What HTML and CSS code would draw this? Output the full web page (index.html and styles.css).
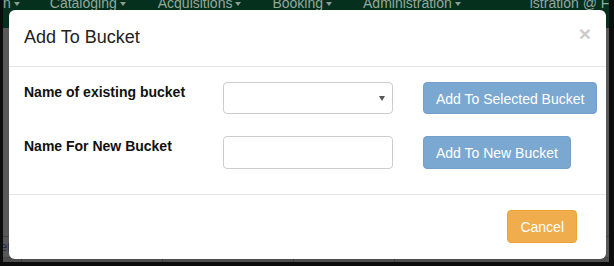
FILE: index.html
```html
<!DOCTYPE html>
<html lang="en">
<head>
<meta charset="utf-8">
<title>Add To Bucket</title>
<link rel="stylesheet" href="styles.css">
</head>
<body>
<div class="screen">
  <div class="page">
    <nav class="navbar">
      <span class="nav-item n1">n<i class="caret"></i></span>
      <span class="nav-item n2">Cataloging<i class="caret"></i></span>
      <span class="nav-item n3">Acquisitions<i class="caret"></i></span>
      <span class="nav-item n4">Booking<i class="caret"></i></span>
      <span class="nav-item n5">Administration<i class="caret"></i></span>
      <span class="nav-item n6">istration @ F</span>
    </nav>
    <div class="page-content">
      <div class="grid-rows">
        <div class="grid-row"><span class="cell-text">et</span></div>
        <div class="grid-row cells">
          <span class="cell c1"></span><span class="cell c2"></span><span class="cell c3"></span><span class="cell c4"></span>
        </div>
      </div>
    </div>
  </div>

  <div class="modal">
    <div class="modal-header">
      <h4 class="modal-title">Add To Bucket</h4>
      <button class="close" type="button">&times;</button>
    </div>
    <div class="modal-body">
      <div class="form-row">
        <label class="row-label">Name of existing bucket</label>
        <div class="select-box"><span class="select-caret"></span></div>
        <button class="btn btn-primary" type="button" disabled>Add To Selected Bucket</button>
      </div>
      <div class="form-row">
        <label class="row-label">Name For New Bucket</label>
        <div class="text-box"></div>
        <button class="btn btn-primary" type="button" disabled>Add To New Bucket</button>
      </div>
    </div>
    <div class="modal-footer">
      <button class="btn btn-warning" type="button">Cancel</button>
    </div>
  </div>
</div>
</body>
</html>
```

FILE: styles.css
```css
html, body {
  margin: 0;
  padding: 0;
  width: 614px;
  height: 266px;
  overflow: hidden;
  background: #0c0c0c;
}

.screen {
  position: relative;
  width: 606px;
  height: 262px;
  margin-left: 3px;
  overflow: hidden;
  background: #585858;
  font-family: "Liberation Sans", Arial, sans-serif;
}

.page {
  display: flex;
  flex-direction: column;
  height: 100%;
}

.navbar {
  height: 28px;
  flex: none;
  background: #05301e;
  display: flex;
  align-items: flex-start;
  color: #94a89c;
  font-size: 14px;
  line-height: 14px;
}

.nav-item {
  margin-top: -4px;
  white-space: nowrap;
}

.n1 { margin-left: 0; }
.n2 { margin-left: 30px; }
.n3 { margin-left: 32px; }
.n4 { margin-left: 31px; }
.n5 { margin-left: 31px; }
.n6 { margin-left: 69px; }

.caret {
  display: inline-block;
  width: 0;
  height: 0;
  margin-left: 3px;
  vertical-align: middle;
  border-top: 4px solid #8a9d92;
  border-left: 3.5px solid transparent;
  border-right: 3.5px solid transparent;
}

.page-content {
  flex: 1;
  display: flex;
  flex-direction: column;
  justify-content: flex-end;
}

.grid-rows {
  display: flex;
  flex-direction: column;
}

.grid-row {
  height: 20px;
  border-top: 1px solid #474747;
  font-size: 13px;
  line-height: 20px;
  color: #1d3050;
}

.cell-text {
  margin-left: -3px;
}

.grid-row.cells {
  height: 4px;
  display: flex;
  background: #4e4e4e;
}

.cell {
  height: 4px;
  border-left: 1px solid #3a3a3a;
}
.c1 { margin-left: 18px; width: 140px; }
.c2 { width: 130px; }
.c3 { width: 100px; }
.c4 { width: 150px; }

/* Modal */
.modal {
  position: absolute;
  left: 6px;
  top: 10px;
  width: 597px;
  height: 249px;
  background: #fff;
  border-radius: 6px;
  box-sizing: border-box;
  display: flex;
  flex-direction: column;
  color: #333;
  font-size: 14px;
  line-height: 20px;
}

.modal-header {
  display: flex;
  align-items: flex-start;
  justify-content: space-between;
  padding: 15px;
  border-bottom: 1px solid #e5e5e5;
}

.modal-title {
  margin: 0;
  font-size: 18px;
  font-weight: normal;
  line-height: 25.7px;
  color: #222;
}

.close {
  margin: 0;
  padding: 0;
  border: 0;
  background: transparent;
  font-family: "Liberation Sans", Arial, sans-serif;
  font-size: 21px;
  font-weight: bold;
  line-height: 21px;
  color: #000;
  opacity: 0.2;
  margin-top: -2px;
}

.modal-body {
  padding: 15px 15px 25px 15px;
  display: flex;
  flex-direction: column;
  gap: 21px;
}

.form-row {
  display: flex;
  align-items: flex-start;
  height: 33px;
}

.row-label {
  width: 199px;
  flex: none;
  font-weight: bold;
  color: #111;
  line-height: 20px;
}

.select-box,
.text-box {
  width: 170px;
  height: 33px;
  flex: none;
  box-sizing: border-box;
  border: 1px solid #cccccc;
  border-radius: 4px;
  background: #fff;
  margin-right: 30px;
}

.select-box {
  display: flex;
  align-items: center;
  justify-content: flex-end;
  padding-right: 7px;
  height: 32px;
}

.select-caret {
  width: 0;
  height: 0;
  border-top: 5px solid #555;
  border-left: 3.5px solid transparent;
  border-right: 3.5px solid transparent;
  margin-top: 1px;
}

.btn {
  flex: none;
  white-space: nowrap;
  font-family: "Liberation Sans", Arial, sans-serif;
  font-size: 14px;
  line-height: 20px;
  padding: 6px 12px;
  height: 33px;
  box-sizing: border-box;
  border: 1px solid transparent;
  border-radius: 4px;
  color: #fff;
  cursor: pointer;
}

.btn-primary {
  background: #7aa8d1;
  border-color: #729fcb;
}

.btn-primary[disabled] {
  cursor: not-allowed;
}

.form-row:first-child .btn {
  height: 32px;
}

.modal-footer {
  display: flex;
  justify-content: flex-end;
  padding: 15px 29px 15px 15px;
  border-top: 1px solid #e5e5e5;
}

.btn-warning {
  background: #f0ad4e;
  border-color: #eea236;
}
```
